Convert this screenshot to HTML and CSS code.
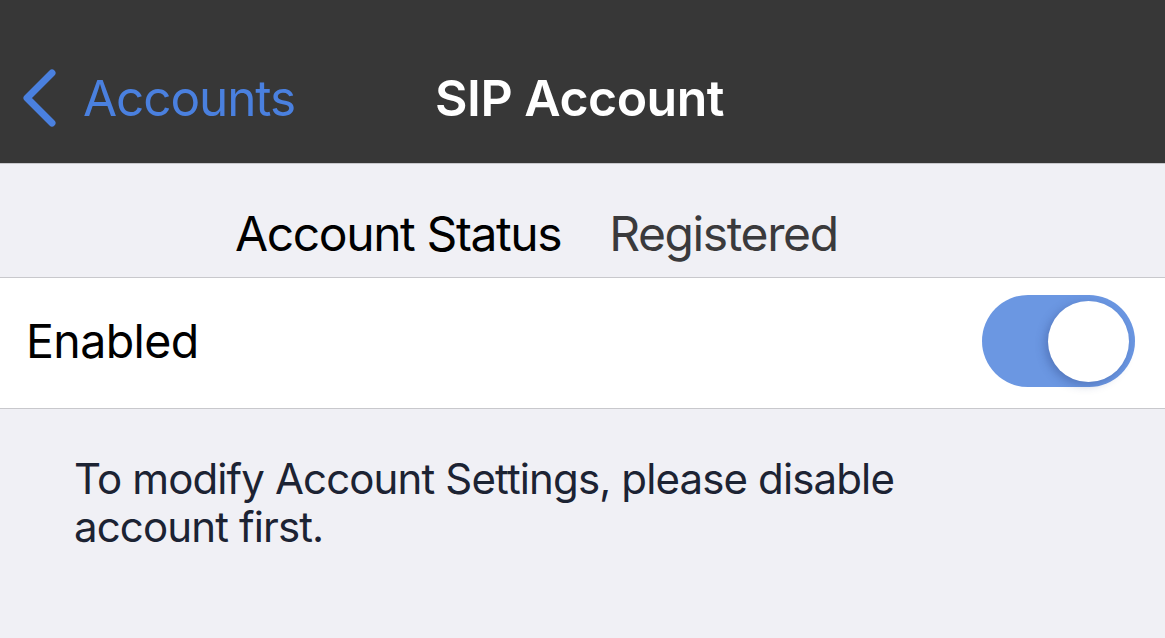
FILE: index.html
```html
<!DOCTYPE html>
<html>
<head>
<meta charset="utf-8">
<link rel="stylesheet" href="styles.css">
</head>
<body>
<div class="screen">
  <header class="navbar">
    <a class="back">
      <svg class="chev" width="36" height="58" viewBox="0 0 36 58"><path d="M31 4 L6 29 L31 54" fill="none" stroke="#4a80df" stroke-width="7" stroke-linecap="round" stroke-linejoin="round"/></svg>
      <span class="back-label">Accounts</span>
    </a>
    <h1 class="title">SIP Account</h1>
  </header>
  <section class="status">
    <span class="status-label">Account Status</span>
    <span class="status-value">Registered</span>
  </section>
  <div class="row">
    <span class="row-label">Enabled</span>
    <div class="toggle"><div class="knob"></div></div>
  </div>
  <p class="footer">To modify Account Settings, please disable<br>account first.</p>
</div>
</body>
</html>
```
FILE: styles.css
```css
* { box-sizing: border-box; }
html, body { margin: 0; padding: 0; }
body {
  width: 1165px;
  height: 638px;
  overflow: hidden;
  background: #f0f0f5;
  font-family: "Inter", "Liberation Sans", sans-serif;
}
.screen { display: flex; flex-direction: column; }
.navbar {
  position: relative;
  height: 163px;
  background: #373737;
  display: flex;
  align-items: center;
  padding-top: 32px;
}
.back {
  display: flex;
  align-items: center;
  padding-left: 21px;
  color: #4a80df;
  font-size: 49.5px;
  gap: 26px;
}
.back-label { letter-spacing: -1.1px; }
.title {
  position: absolute;
  left: 0; right: 0;
  top: 32px; bottom: 0;
  margin: 0;
  padding-right: 6px;
  display: flex;
  align-items: center;
  justify-content: center;
  color: #fff;
  font-size: 50px;
  font-weight: 600;
  letter-spacing: -0.5px;
  pointer-events: none;
}
.status {
  height: 115px;
  border-top: 1px solid #c8c8cc;
  border-bottom: 1px solid #c8c8cc;
  display: flex;
  align-items: center;
  justify-content: flex-start;
  gap: 48px;
  padding: 25px 0 0 235px;
  font-size: 48px;
  letter-spacing: -1.4px;
}
.status-label { color: #000; }
.status-value { color: #3a3a3c; }
.row {
  height: 131px;
  background: #fff;
  border-bottom: 1px solid #c8c8cc;
  display: flex;
  align-items: center;
  justify-content: space-between;
  padding: 0 30px 5px 26px;
}
.row-label { font-size: 46.5px; color: #000; letter-spacing: -0.6px; }
.toggle {
  width: 153px;
  height: 92px;
  border-radius: 46px;
  background: #6b97e2;
  position: relative;
}
.knob {
  position: absolute;
  right: 6px;
  top: 6px;
  width: 81px;
  height: 81px;
  border-radius: 50%;
  background: #fff;
  box-shadow: -3px 3px 10px rgba(40, 60, 120, 0.35);
}
.footer {
  margin: 0;
  padding: 46px 0 0 74px;
  font-size: 42px;
  line-height: 48px;
  color: #1c2333;
  letter-spacing: -0.87px;
}
```
